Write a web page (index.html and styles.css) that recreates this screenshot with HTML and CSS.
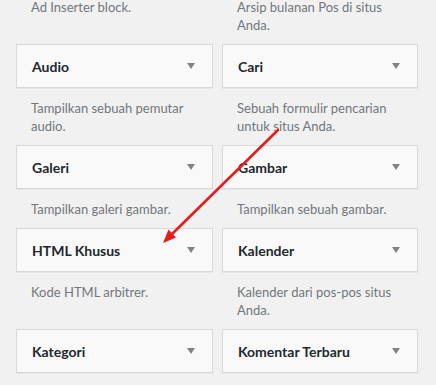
FILE: index.html
```html
<!DOCTYPE html>
<html>
<head>
<meta charset="utf-8">
<link rel="stylesheet" href="styles.css">
</head>
<body>
<div class="page">
  <div class="grid">
    <div class="cell first"><p class="desc">Ad Inserter block.</p></div>
    <div class="cell first"><p class="desc">Arsip bulanan Pos di situs<br>Anda.</p></div>

    <div class="cell"><div class="card"><span class="title">Audio</span><span class="caret"></span></div><p class="desc">Tampilkan sebuah pemutar<br>audio.</p></div>
    <div class="cell"><div class="card"><span class="title">Cari</span><span class="caret"></span></div><p class="desc">Sebuah formulir pencarian<br>untuk situs Anda.</p></div>

    <div class="cell"><div class="card"><span class="title">Galeri</span><span class="caret"></span></div><p class="desc">Tampilkan galeri gambar.</p></div>
    <div class="cell"><div class="card"><span class="title">Gambar</span><span class="caret"></span></div><p class="desc">Tampilkan sebuah gambar.</p></div>

    <div class="cell"><div class="card"><span class="title">HTML Khusus</span><span class="caret"></span></div><p class="desc">Kode HTML arbitrer.</p></div>
    <div class="cell"><div class="card"><span class="title">Kalender</span><span class="caret"></span></div><p class="desc">Kalender dari pos-pos situs<br>Anda.</p></div>

    <div class="cell"><div class="card"><span class="title">Kategori</span><span class="caret"></span></div></div>
    <div class="cell"><div class="card"><span class="title">Komentar Terbaru</span><span class="caret"></span></div></div>
  </div>
  <svg class="arrow" width="436" height="385" viewBox="0 0 436 385" xmlns="http://www.w3.org/2000/svg">
    <line x1="278" y1="130" x2="171" y2="235" stroke="#e41e1e" stroke-width="2.6" stroke-linecap="round"/>
    <polygon points="163,243 176,237.5 168.5,229.5" fill="#e41e1e"/>
  </svg>
</div>
</body>
</html>
```

FILE: styles.css
```css
html, body {
  margin: 0;
  padding: 0;
  background: #f1f1f1;
}
body {
  font-family: "Lato", "Open Sans", sans-serif;
  color: #23282d;
  width: 436px;
  height: 385px;
  overflow: hidden;
}
.page {
  position: relative;
  width: 436px;
  height: 385px;
}
.grid {
  display: grid;
  grid-template-columns: 197px 196px;
  column-gap: 9px;
  padding-left: 16px;
}
.cell {
  display: flex;
  flex-direction: column;
}
.card {
  box-sizing: border-box;
  height: 44px;
  background: #f9f9f9;
  border: 1px solid #d9d9d9;
  box-shadow: 0 1px 1px rgba(0, 0, 0, 0.04);
  display: flex;
  align-items: center;
  justify-content: space-between;
  padding: 0 17px 0 15px;
}
.title {
  font-size: 14px;
  font-weight: 700;
  color: #23282d;
  line-height: 18px;
  margin-top: 2px;
}
.caret {
  width: 0;
  height: 0;
  border-left: 4.5px solid transparent;
  border-right: 4.5px solid transparent;
  border-top: 6px solid #7e8387;
}
.desc {
  margin: 11px 15px 10px 15px;
  font-size: 13px;
  line-height: 18px;
  color: #72777c;
  white-space: nowrap;
}
.first .desc {
  margin-top: -2px;
}
.arrow {
  position: absolute;
  left: 0;
  top: 0;
  pointer-events: none;
}
```
